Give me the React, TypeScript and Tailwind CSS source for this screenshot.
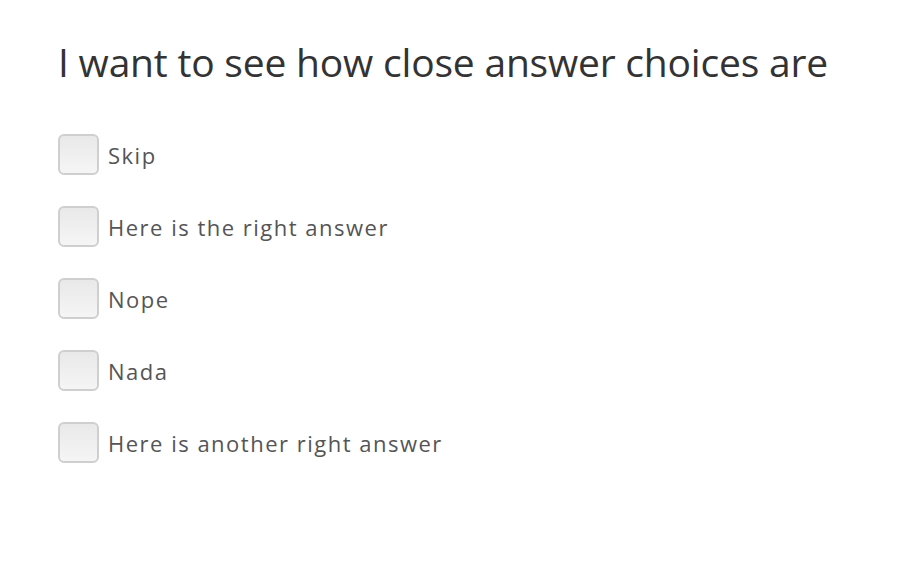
const choices = [
  "Skip",
  "Here is the right answer",
  "Nope",
  "Nada",
  "Here is another right answer",
];

export default function App() {
  return (
    <div className="min-h-screen bg-white pl-[58px] pt-[36px]" style={{ fontFamily: '"Open Sans", sans-serif' }}>
      <h1 className="text-[39px] leading-[52px] text-[#333] tracking-[-0.2px]">
        I want to see how close answer choices are
      </h1>
      <ul className="mt-[46px] flex flex-col gap-[31px]">
        {choices.map((c) => (
          <li key={c} className="flex items-center gap-[9px]">
            <span className="block h-[41px] w-[41px] rounded-[6px] border-2 border-[#cfcfcf] bg-gradient-to-b from-[#e9e9e9] to-[#f5f5f5]" />
            <span className="text-[22px] leading-[28px] tracking-[1.5px] text-[#555]">{c}</span>
          </li>
        ))}
      </ul>
    </div>
  );
}
